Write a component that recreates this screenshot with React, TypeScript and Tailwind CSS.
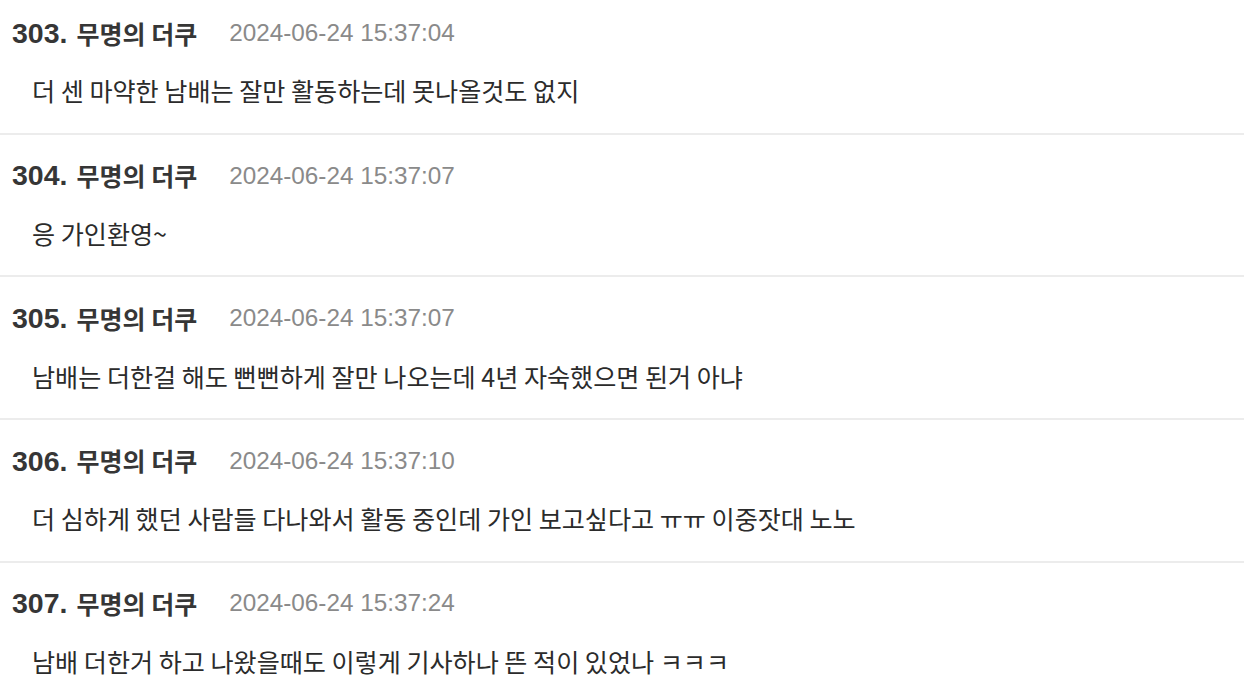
import React from "react";

const posts = [
  { no: "303.", time: "2024-06-24 15:37:04", body: "더 센 마약한 남배는 잘만 활동하는데 못나올것도 없지" },
  { no: "304.", time: "2024-06-24 15:37:07", body: "응 가인환영~" },
  { no: "305.", time: "2024-06-24 15:37:07", body: "남배는 더한걸 해도 뻔뻔하게 잘만 나오는데 4년 자숙했으면 된거 아냐" },
  { no: "306.", time: "2024-06-24 15:37:10", body: "더 심하게 했던 사람들 다나와서 활동 중인데 가인 보고싶다고 ㅠㅠ 이중잣대 노노" },
  { no: "307.", time: "2024-06-24 15:37:24", body: "남배 더한거 하고 나왔을때도 이렇게 기사하나 뜬 적이 있었나 ㅋㅋㅋ" },
];

export default function App() {
  return (
    <div className="w-[1244px] h-[698px] overflow-hidden bg-white">
      <div className="-mt-[8px] flex flex-col">
        {posts.map((p) => (
          <div
            key={p.no}
            className="h-[142.67px] shrink-0 border-b-2 border-[#ececec] flex flex-col pt-[21px]"
          >
            <div className="flex items-center h-[40px] pl-[12px]">
              <span className="font-['Liberation_Sans',sans-serif] font-bold text-[28.5px] text-[#363636] leading-none">
                {p.no}
              </span>
              <span className="ml-[9px] font-['Noto_Sans_CJK_KR',sans-serif] font-bold text-[25px] text-[#363636] leading-none whitespace-pre">
                무명의 더쿠
              </span>
              <span className="ml-[32px] font-['Liberation_Sans',sans-serif] text-[24.3px] text-[#8a8a8a] leading-none">
                {p.time}
              </span>
            </div>
            <div className="mt-[18px] h-[40px] flex items-center pl-[32px] font-['Noto_Sans_CJK_KR',sans-serif] text-[25.1px] text-[#2b2b2b] leading-none whitespace-pre">
              {p.body}
            </div>
          </div>
        ))}
      </div>
    </div>
  );
}
